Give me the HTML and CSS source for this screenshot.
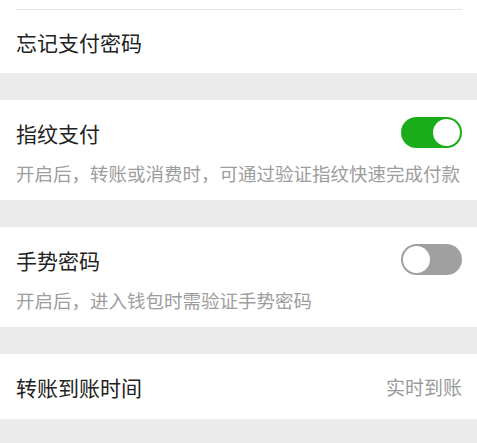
FILE: index.html
```html
<!DOCTYPE html>
<html lang="zh-CN">
<head>
<meta charset="utf-8">
<link rel="stylesheet" href="styles.css">
</head>
<body>
<div class="page">
  <section class="group">
    <div class="stub"></div>
    <div class="row">
      <span class="label">忘记支付密码</span>
    </div>
  </section>

  <section class="group block">
    <div class="head">
      <span class="title">指纹支付</span>
      <span class="switch on"><span class="knob"></span></span>
    </div>
    <p class="desc">开启后，转账或消费时，可通过验证指纹快速完成付款</p>
  </section>

  <section class="group block">
    <div class="head">
      <span class="title">手势密码</span>
      <span class="switch off"><span class="knob"></span></span>
    </div>
    <p class="desc">开启后，进入钱包时需验证手势密码</p>
  </section>

  <section class="group">
    <div class="row row-last">
      <span class="label">转账到账时间</span>
      <span class="value">实时到账</span>
    </div>
  </section>
</div>
</body>
</html>
```

FILE: styles.css
```css
html, body {
  margin: 0;
  padding: 0;
}
body {
  background: #ebebeb;
  font-family: "Noto Sans CJK SC", "Noto Sans", sans-serif;
  width: 477px;
  height: 443px;
  overflow: hidden;
}
.page {
  display: flex;
  flex-direction: column;
  gap: 27px;
}
.group {
  background: #ffffff;
}
.stub {
  height: 9px;
  margin-left: 16px;
  margin-right: 15px;
  border-bottom: 1px solid #e6e6e6;
}
.row {
  height: 63px;
  padding: 0 15px 0 16px;
  display: flex;
  align-items: center;
  justify-content: space-between;
}
.row-last {
  height: 65px;
}
.label {
  font-size: 21px;
  color: #222222;
  line-height: 32px;
}
.title {
  font-size: 21px;
  color: #222222;
  line-height: 32px;
  padding-top: 2px;
}
.value {
  font-size: 19px;
  color: #9a9a9a;
  line-height: 32px;
}
.block {
  padding: 16px 15px 15px 16px;
}
.head {
  height: 32px;
  display: flex;
  align-items: center;
  justify-content: space-between;
}
.desc {
  margin: 13px 0 0;
  font-size: 18.5px;
  line-height: 24px;
  color: #9d9d9d;
  white-space: nowrap;
}
.switch {
  width: 61px;
  height: 31px;
  border-radius: 16px;
  box-sizing: border-box;
  display: flex;
  align-items: center;
  padding: 2px;
}
.switch.on {
  background: #1aad19;
  justify-content: flex-end;
}
.switch.off {
  background: #a0a0a0;
  justify-content: flex-start;
}
.knob {
  width: 27px;
  height: 27px;
  border-radius: 50%;
  background: #ffffff;
}
```
